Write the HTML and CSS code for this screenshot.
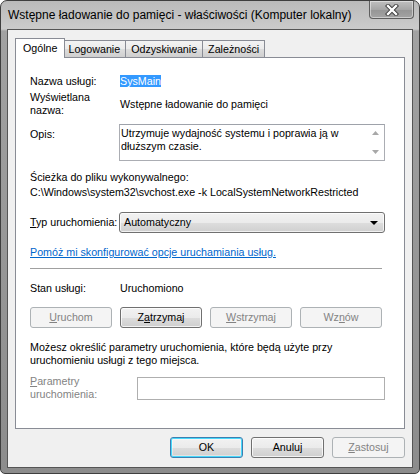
FILE: index.html
```html
<!DOCTYPE html>
<html lang="pl">
<head>
<meta charset="utf-8">
<title>Właściwości usługi</title>
<link rel="stylesheet" href="styles.css">
</head>
<body>
<div class="window">
  <div class="titlebar">
    <span class="title">Wstępne ładowanie do pamięci - właściwości (Komputer lokalny)</span>
    <div class="close">
      <svg width="14" height="12" viewBox="0 0 14 12">
        <path d="M3 2 L11 10 M11 2 L3 10" stroke="#3a3a3a" stroke-width="4.2" stroke-linecap="square"/>
        <path d="M3 2 L11 10 M11 2 L3 10" stroke="#ffffff" stroke-width="2.4" stroke-linecap="square"/>
      </svg>
    </div>
  </div>
  <div class="client">
    <div class="tabs">
      <div class="tab active">Ogólne</div>
      <div class="tab">Logowanie</div>
      <div class="tab">Odzyskiwanie</div>
      <div class="tab">Zależności</div>
    </div>
    <div class="panel">
      <div class="row r-name">
        <span class="label">Nazwa usługi:</span>
        <span class="value"><span class="selected">SysMain</span></span>
      </div>
      <div class="row r-display">
        <span class="label">Wyświetlana<br>nazwa:</span>
        <span class="value">Wstępne ładowanie do pamięci</span>
      </div>
      <div class="row r-desc">
        <span class="label label-desc">Opis:</span>
        <div class="memo">
          <div class="memo-text">Utrzymuje wydajność systemu i poprawia ją w dłuższym czasie.</div>
          <div class="scrollbar">
            <svg width="7" height="4" viewBox="0 0 7 4"><path d="M0 4 L3.5 0 L7 4 Z" fill="#a8a8a8"/></svg>
            <svg width="7" height="4" viewBox="0 0 7 4"><path d="M0 0 L3.5 4 L7 0 Z" fill="#a8a8a8"/></svg>
          </div>
        </div>
      </div>
      <div class="line r-path-label">Ścieżka do pliku wykonywalnego:</div>
      <div class="line r-path">C:\Windows\system32\svchost.exe -k LocalSystemNetworkRestricted</div>
      <div class="row r-type">
        <span class="label label-type"><u>T</u>yp uruchomienia:</span>
        <div class="combo">
          <span>Automatyczny</span>
          <svg width="8" height="4" viewBox="0 0 8 4"><path d="M0 0 L8 0 L4 4 Z" fill="#000"/></svg>
        </div>
      </div>
      <div class="line r-link"><span class="link">Pomóż mi skonfigurować opcje uruchamiania usług.</span></div>
      <div class="separator"></div>
      <div class="row r-state">
        <span class="label">Stan usługi:</span>
        <span class="value">Uruchomiono</span>
      </div>
      <div class="svc-buttons">
        <div class="btn disabled"><u>U</u>ruchom</div>
        <div class="btn">Z<u>a</u>trzymaj</div>
        <div class="btn disabled"><u>W</u>strzymaj</div>
        <div class="btn disabled">Wz<u>n</u>ów</div>
      </div>
      <div class="line r-note">Możesz określić parametry uruchomienia, które będą użyte przy<br>uruchomieniu usługi z tego miejsca.</div>
      <div class="row r-params">
        <span class="label label-params"><u>P</u>arametry<br>uruchomienia:</span>
        <div class="field"></div>
      </div>
    </div>
    <div class="footer">
      <div class="btn default">OK</div>
      <div class="btn">Anuluj</div>
      <div class="btn disabled"><u>Z</u>astosuj</div>
    </div>
  </div>
</div>
</body>
</html>
```

FILE: styles.css
```css
html, body {
  margin: 0;
  padding: 0;
  background: #ffffff;
}

.window {
  width: 420px;
  height: 474px;
  box-sizing: border-box;
  border: 1px solid #3e3e3e;
  border-radius: 7px 7px 5px 5px;
  background: linear-gradient(to bottom, #bababa 0, #cbcbcb 28px, #a2a2a2 30px, #8c8c8c 100%);
  display: flex;
  flex-direction: column;
  font-family: "Liberation Sans", Arial, sans-serif;
  font-size: 10.7px;
  line-height: 13px;
  color: #000;
}

.titlebar {
  height: 28px;
  display: flex;
  justify-content: space-between;
  align-items: flex-start;
  padding: 0 5px 0 7px;
}

.title {
  font-size: 12px;
  line-height: 16px;
  padding-top: 6px;
  color: #000;
  white-space: nowrap;
}

.close {
  width: 45px;
  height: 18px;
  box-sizing: border-box;
  border: 1px solid #5e5e5e;
  border-top: none;
  border-radius: 0 0 4px 4px;
  background: linear-gradient(to bottom, #c0c0c0 0, #a6a6a6 50%, #959595 51%, #a3a3a3 100%);
  box-shadow: inset 0 0 0 1px rgba(255,255,255,0.45);
  display: flex;
  align-items: center;
  justify-content: center;
}

.client {
  flex: 1;
  margin: 0 6px 5px 6px;
  border: 1px solid #555555;
  background: #f0f0f0;
  display: flex;
  flex-direction: column;
}

.tabs {
  display: flex;
  align-items: flex-end;
  height: 20px;
  margin: 8px 0 0 7px;
  position: relative;
  z-index: 1;
}

.tab {
  height: 17px;
  box-sizing: border-box;
  margin-bottom: 1px;
  margin-left: -1px;
  padding: 2px 5px 0 5px;
  border: 1px solid #898c95;
  border-bottom: none;
  background: linear-gradient(to bottom, #f3f3f3 0, #ebebeb 50%, #dddddd 51%, #cfcfcf 100%);
  white-space: nowrap;
}

.tab.active {
  height: 20px;
  margin-bottom: 0;
  margin-left: 0;
  margin-right: -2px;
  padding: 3px 7px 0 7px;
  background: #ffffff;
  position: relative;
  z-index: 2;
}

.panel {
  margin: -1px 7px 0 7px;
  height: 372px;
  box-sizing: border-box;
  border: 1px solid #898c95;
  background: #ffffff;
  padding: 17px 19px 0 14px;
}

.row {
  display: flex;
  align-items: flex-start;
}

.label {
  width: 90px;
  flex: none;
  white-space: nowrap;
}

.value {
  white-space: nowrap;
}

.selected {
  background: #3399ff;
  color: #ffffff;
}

.r-display {
  margin-top: 3px;
  align-items: center;
}

.r-desc {
  margin-top: 7px;
}

.label-desc {
  width: 89px;
  padding-top: 4px;
}

.memo {
  width: 266px;
  height: 37px;
  box-sizing: border-box;
  border: 1px solid #abadb3;
  border-top-color: #9ea2aa;
  display: flex;
}

.memo-text {
  flex: 1;
  padding: 2px 2px 0 1px;
}

.scrollbar {
  width: 17px;
  display: flex;
  flex-direction: column;
  justify-content: space-between;
  align-items: center;
  padding: 6px 0 6px 0;
  background: #ffffff;
}

.line {
  white-space: nowrap;
}

.r-path-label {
  margin-top: 10px;
}

.r-path {
  margin-top: 2px;
}

.r-type {
  margin-top: 13px;
  align-items: center;
}

.label-type {
  width: 89px;
}

.combo {
  width: 266px;
  height: 21px;
  box-sizing: border-box;
  border: 1px solid #707070;
  border-radius: 3px;
  background: linear-gradient(to bottom, #f2f2f2 0, #ebebeb 50%, #dddddd 51%, #cfcfcf 100%);
  box-shadow: inset 0 0 0 1px rgba(255,255,255,0.7);
  display: flex;
  align-items: center;
  justify-content: space-between;
  padding: 0 6px 0 4px;
}

.r-link {
  margin-top: 13px;
}

.link {
  color: #0066cc;
  text-decoration: underline;
}

.separator {
  margin-top: 9px;
  width: 352px;
  height: 1px;
  background: #a0a0a0;
}

.r-state {
  margin-top: 13px;
}

.svc-buttons {
  margin-top: 12px;
  display: flex;
  gap: 8px;
}

.svc-buttons .btn {
  width: 82px;
}

.btn {
  height: 21px;
  box-sizing: border-box;
  border: 1px solid #707070;
  border-radius: 3px;
  background: linear-gradient(to bottom, #f2f2f2 0, #ebebeb 50%, #dddddd 51%, #cfcfcf 100%);
  box-shadow: inset 0 0 0 1px rgba(255,255,255,0.75);
  display: flex;
  align-items: center;
  justify-content: center;
  color: #000;
}

.btn.disabled {
  border-color: #adb2b5;
  background: #f4f4f4;
  box-shadow: none;
  color: #838383;
}

.btn.default {
  border-color: #3c7fb1;
  box-shadow: inset 0 0 0 1px #48d8fb, inset 0 0 0 2px rgba(255,255,255,0.4);
}

.r-note {
  margin-top: 13px;
}

.r-params {
  margin-top: 10px;
}

.label-params {
  width: 107px;
  margin-top: -2px;
  color: #838383;
}

.field {
  width: 248px;
  height: 23px;
  box-sizing: border-box;
  border: 1px solid #afafaf;
  background: #ffffff;
}

.footer {
  display: flex;
  justify-content: flex-end;
  gap: 8px;
  margin-top: 8px;
  padding-right: 7px;
}

.footer .btn {
  width: 73px;
}
```
